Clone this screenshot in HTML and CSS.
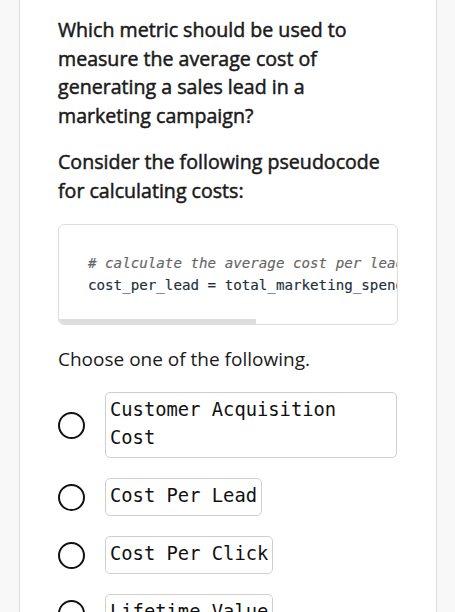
FILE: index.html
```html
<!DOCTYPE html>
<html>
<head>
<meta charset="utf-8">
<link rel="stylesheet" href="styles.css">
</head>
<body>
<div class="page">
  <div class="card">
    <p class="q">Which metric should be used to measure the average cost of generating a sales lead in a marketing campaign?</p>
    <p class="q">Consider the following pseudocode for calculating costs:</p>
    <div class="code">
      <div class="scroll"><pre><span class="cm"># calculate the average cost per lead</span>
cost_per_lead = total_marketing_spend / total_leads_generated</pre></div>
      <div class="bar"><div class="thumb"></div></div>
    </div>
    <p class="choose">Choose one of the following.</p>
    <div class="options">
      <div class="opt"><span class="radio"></span><span class="label">Customer Acquisition Cost</span></div>
      <div class="opt"><span class="radio"></span><span class="label">Cost Per Lead</span></div>
      <div class="opt"><span class="radio"></span><span class="label">Cost Per Click</span></div>
      <div class="opt"><span class="radio"></span><span class="label">Lifetime Value</span></div>
    </div>
  </div>
</div>
</body>
</html>
```
FILE: styles.css
```css
html, body { margin: 0; padding: 0; background: #f8f8f8; }
body { font-family: "Open Sans", sans-serif; color: #1a1a1a; }
.page { padding: 0 18px 0 19px; }
.card {
  background: #fff;
  border-left: 1px solid #dedede;
  border-right: 1px solid #dedede;
  box-shadow: 0 0 3px rgba(0,0,0,0.04);
  padding: 16px 38px 40px 38px;
  min-height: 700px;
}
.q {
  margin: 0 0 18px 0;
  font-size: 19.6px;
  font-weight: 400;
  -webkit-text-stroke: 0.5px #1a1a1a;
  line-height: 28.5px;
}
.code {
  margin-top: 19px;
  border: 1px solid #dddddd;
  border-radius: 6px;
  overflow: hidden;
}
.scroll { overflow: hidden; }
.code pre {
  margin: 0;
  padding: 27px 30px 23px 29px;
  font-family: "DejaVu Sans Mono", monospace;
  font-size: 14.2px;
  line-height: 22px;
  color: #22303e;
  -webkit-text-stroke: 0.15px #22303e;
  width: max-content;
}
.cm { font-style: italic; color: #666; -webkit-text-stroke: 0.15px #666; }
.bar { height: 5px; }
.thumb { width: 197px; height: 5px; background: #dddddd; }
.choose {
  margin: 20px 0 19px 0;
  font-size: 19px;
  line-height: 28px;
  color: #1a1a1a;
}
.options { display: flex; flex-direction: column; gap: 20px; }
.opt { display: flex; align-items: center; gap: 20px; }
.radio {
  flex: none;
  width: 23px; height: 23px;
  border: 2px solid #111;
  border-radius: 50%;
}
.label {
  display: inline-block;
  border: 1px solid #cfcfcf;
  border-radius: 5px;
  padding: 3px 4px 5px 4px;
  font-family: "DejaVu Sans Mono", monospace;
  font-size: 18.8px;
  line-height: 28px;
  color: #111;
  max-width: 282px;
}
```
